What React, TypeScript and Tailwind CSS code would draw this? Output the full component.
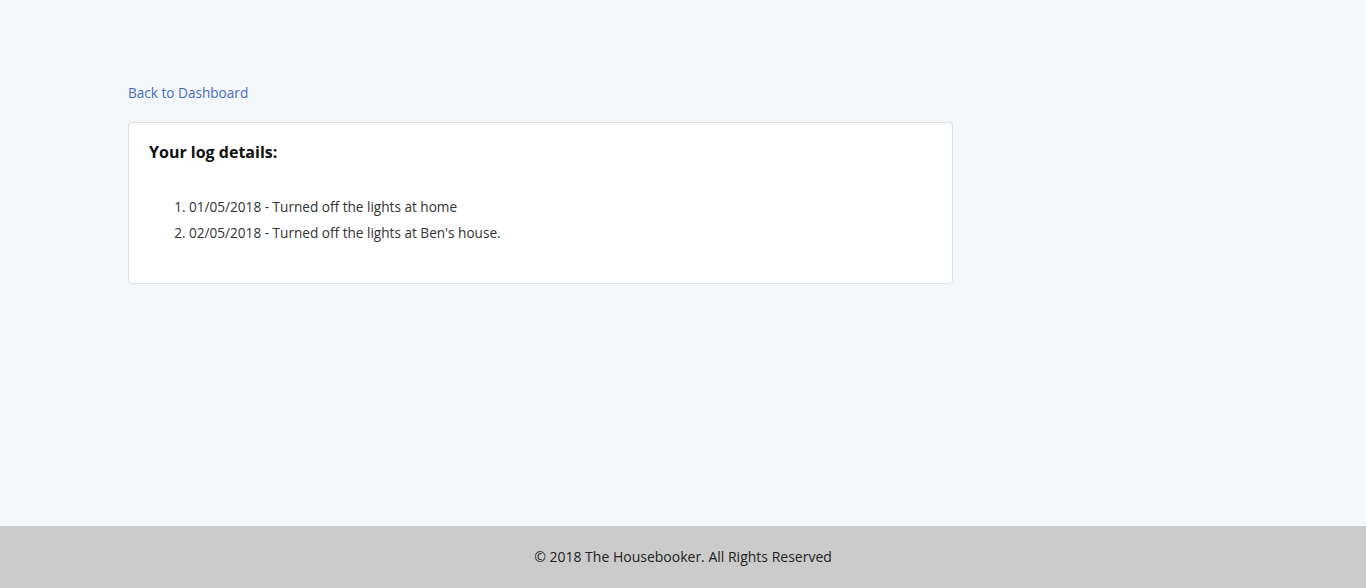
export default function App() {
  return (
    <div className="flex min-h-[588px] flex-col bg-[#f4f7fa] font-['Open_Sans',sans-serif] text-[#333]">
      <main className="flex-1 px-[128px] pt-[80px]">
        <a href="#" className="text-[13.6px] leading-[21px] text-[#4a6cbf] hover:underline">
          Back to Dashboard
        </a>

        {/* Log card */}
        <div className="mt-[18px] w-[825px] rounded-[4px] border border-[#dedede] bg-white px-[20px] pt-[19px] pb-[37px]">
          <h2 className="text-[16px] font-bold leading-[20px] text-[#111]">Your log details:</h2>
          <ol className="mt-[32px] list-decimal pl-[40px] text-[13.6px] leading-[26px] text-[#333]">
            <li>01/05/2018 - Turned off the lights at home</li>
            <li>02/05/2018 - Turned off the lights at Ben's house.</li>
          </ol>
        </div>
      </main>

      <footer className="flex h-[62px] items-center justify-center bg-[#cbcbcb] pb-[2px] text-[14px] text-[#222]">
        © 2018 The Housebooker. All Rights Reserved
      </footer>
    </div>
  )
}
